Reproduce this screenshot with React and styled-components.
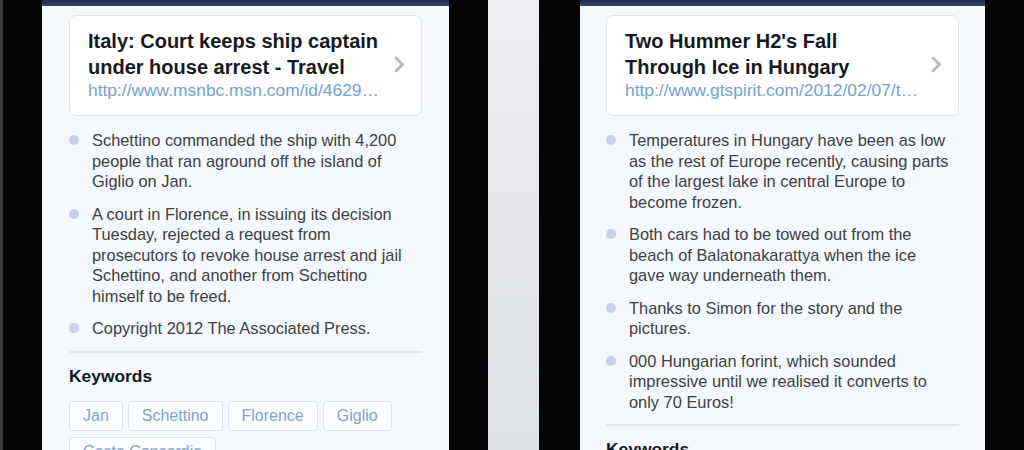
import React from "react";
import styled, { createGlobalStyle } from "styled-components";

const Global = createGlobalStyle`
  html, body { margin: 0; padding: 0; background: #e5e7eb; }
  body { font-family: "Liberation Sans", Arial, sans-serif; }
`;

const Stage = styled.div`
  display: flex;
  width: 1024px;
  height: 450px;
  overflow: hidden;
  background: linear-gradient(180deg, #eceef1 0%, #e3e5e9 60%, #dcdfe4 100%);
`;

const Device = styled.div`
  display: flex;
  flex: none;
  background: #050505;
  padding: 0 ${(p) => p.$pr}px 0 ${(p) => p.$pl}px;
  border-left: ${(p) => (p.$edge ? "3px solid #3c3c3c" : "none")};
`;

const Gap = styled.div`
  flex: none;
  width: 51px;
  background: linear-gradient(180deg, #ecedf0 0%, #e4e6ea 50%, #dfe2e6 100%);
`;

const Screen = styled.div`
  width: ${(p) => p.$w}px;
  height: 450px;
  background: #f4f8fc;
  display: flex;
  flex-direction: column;
  overflow: hidden;
`;

const TopBar = styled.div`
  height: 6px;
  flex: none;
  background: linear-gradient(180deg, #1d2c47 0%, #34476b 100%);
`;

const Content = styled.div`
  padding: 9px ${(p) => p.$px}px 0;
`;

const Card = styled.div`
  display: flex;
  align-items: center;
  gap: 8px;
  background: #ffffff;
  border: 1px solid #dce4ee;
  border-radius: 7px;
  padding: 12px 16px 15px 18px;
`;

const CardText = styled.div`
  flex: 1;
  min-width: 0;
`;

const Title = styled.div`
  font-size: 20px;
  font-weight: 700;
  line-height: 26px;
  color: #161a20;
`;

const Url = styled.div`
  font-size: 17.4px;
  line-height: 20px;
  color: #73a0d8;
  white-space: nowrap;
`;

const Chevron = styled.svg`
  flex: none;
  width: 11px;
  height: 17px;
`;

const Bullets = styled.ul`
  list-style: none;
  margin: 14px 0 0;
  padding: 0;
`;

const Item = styled.li`
  display: flex;
  align-items: flex-start;
  padding-right: 7px;
  margin-bottom: 12px;
  &:last-child { margin-bottom: 0; }
`;

const Dot = styled.span`
  flex: none;
  width: 10px;
  height: 10px;
  border-radius: 50%;
  background: #c7d1ea;
  margin: 5px 13px 0 0;
`;

const ItemText = styled.span`
  font-size: 16.4px;
  line-height: 20.5px;
  color: #3d3f42;
`;

const Divider = styled.hr`
  border: none;
  border-top: 2px solid #e1e7ef;
  margin: 12px 0 0;
`;

const Heading = styled.div`
  margin-top: 13px;
  font-size: 17.4px;
  font-weight: 700;
  line-height: 20px;
  color: #16191e;
`;

const Tags = styled.div`
  display: flex;
  flex-wrap: wrap;
  gap: 6px 5px;
  margin-top: 15px;
`;

const Tag = styled.span`
  height: 28px;
  line-height: 28px;
  padding: 0 13px;
  border: 1px solid #d8e3f1;
  border-radius: 4px;
  background: #fbfdff;
  font-size: 16px;
  color: #7ca1d2;
`;

const ChevronIcon = () => (
  <Chevron viewBox="0 0 11 17">
    <path d="M2 2 L8.5 8.5 L2 15" fill="none" stroke="#b3b6bb" strokeWidth="2.8" strokeLinecap="round" strokeLinejoin="round" />
  </Chevron>
);

const Article = ({ w, px, title, url, bullets, keywords }) => (
  <Screen $w={w}>
    <TopBar />
    <Content $px={px}>
      <Card>
        <CardText>
          <Title>{title.map((t, i) => <div key={i}>{t}</div>)}</Title>
          <Url>{url}</Url>
        </CardText>
        <ChevronIcon />
      </Card>
      <Bullets>
        {bullets.map((b, i) => (
          <Item key={i}>
            <Dot />
            <ItemText>{b}</ItemText>
          </Item>
        ))}
      </Bullets>
      <Divider />
      <Heading>Keywords</Heading>
      <Tags>
        {keywords.map((k) => (
          <Tag key={k}>{k}</Tag>
        ))}
      </Tags>
    </Content>
  </Screen>
);

export default function App() {
  return (
    <>
      <Global />
      <Stage>
        <Device $edge $pl={39} $pr={39}>
          <Article
            w={407}
            px={27}
            title={["Italy: Court keeps ship captain", "under house arrest - Travel"]}
            url="http://www.msnbc.msn.com/id/4629…"
            bullets={[
              "Schettino commanded the ship with 4,200 people that ran aground off the island of Giglio on Jan.",
              "A court in Florence, in issuing its decision Tuesday, rejected a request from prosecutors to revoke house arrest and jail Schettino, and another from Schettino himself to be freed.",
              "Copyright 2012 The Associated Press.",
            ]}
            keywords={["Jan", "Schettino", "Florence", "Giglio", "Costa Concordia"]}
          />
        </Device>
        <Gap />
        <Device $pl={41} $pr={39}>
          <Article
            w={405}
            px={26}
            title={["Two Hummer H2's Fall", "Through Ice in Hungary"]}
            url="http://www.gtspirit.com/2012/02/07/t…"
            bullets={[
              "Temperatures in Hungary have been as low as the rest of Europe recently, causing parts of the largest lake in central Europe to become frozen.",
              "Both cars had to be towed out from the beach of Balatonakarattya when the ice gave way underneath them.",
              "Thanks to Simon for the story and the pictures.",
              "000 Hungarian forint, which sounded impressive until we realised it converts to only 70 Euros!",
            ]}
            keywords={["Hungary", "Balatonakarattya", "Simon", "Europe"]}
          />
        </Device>
      </Stage>
    </>
  );
}
